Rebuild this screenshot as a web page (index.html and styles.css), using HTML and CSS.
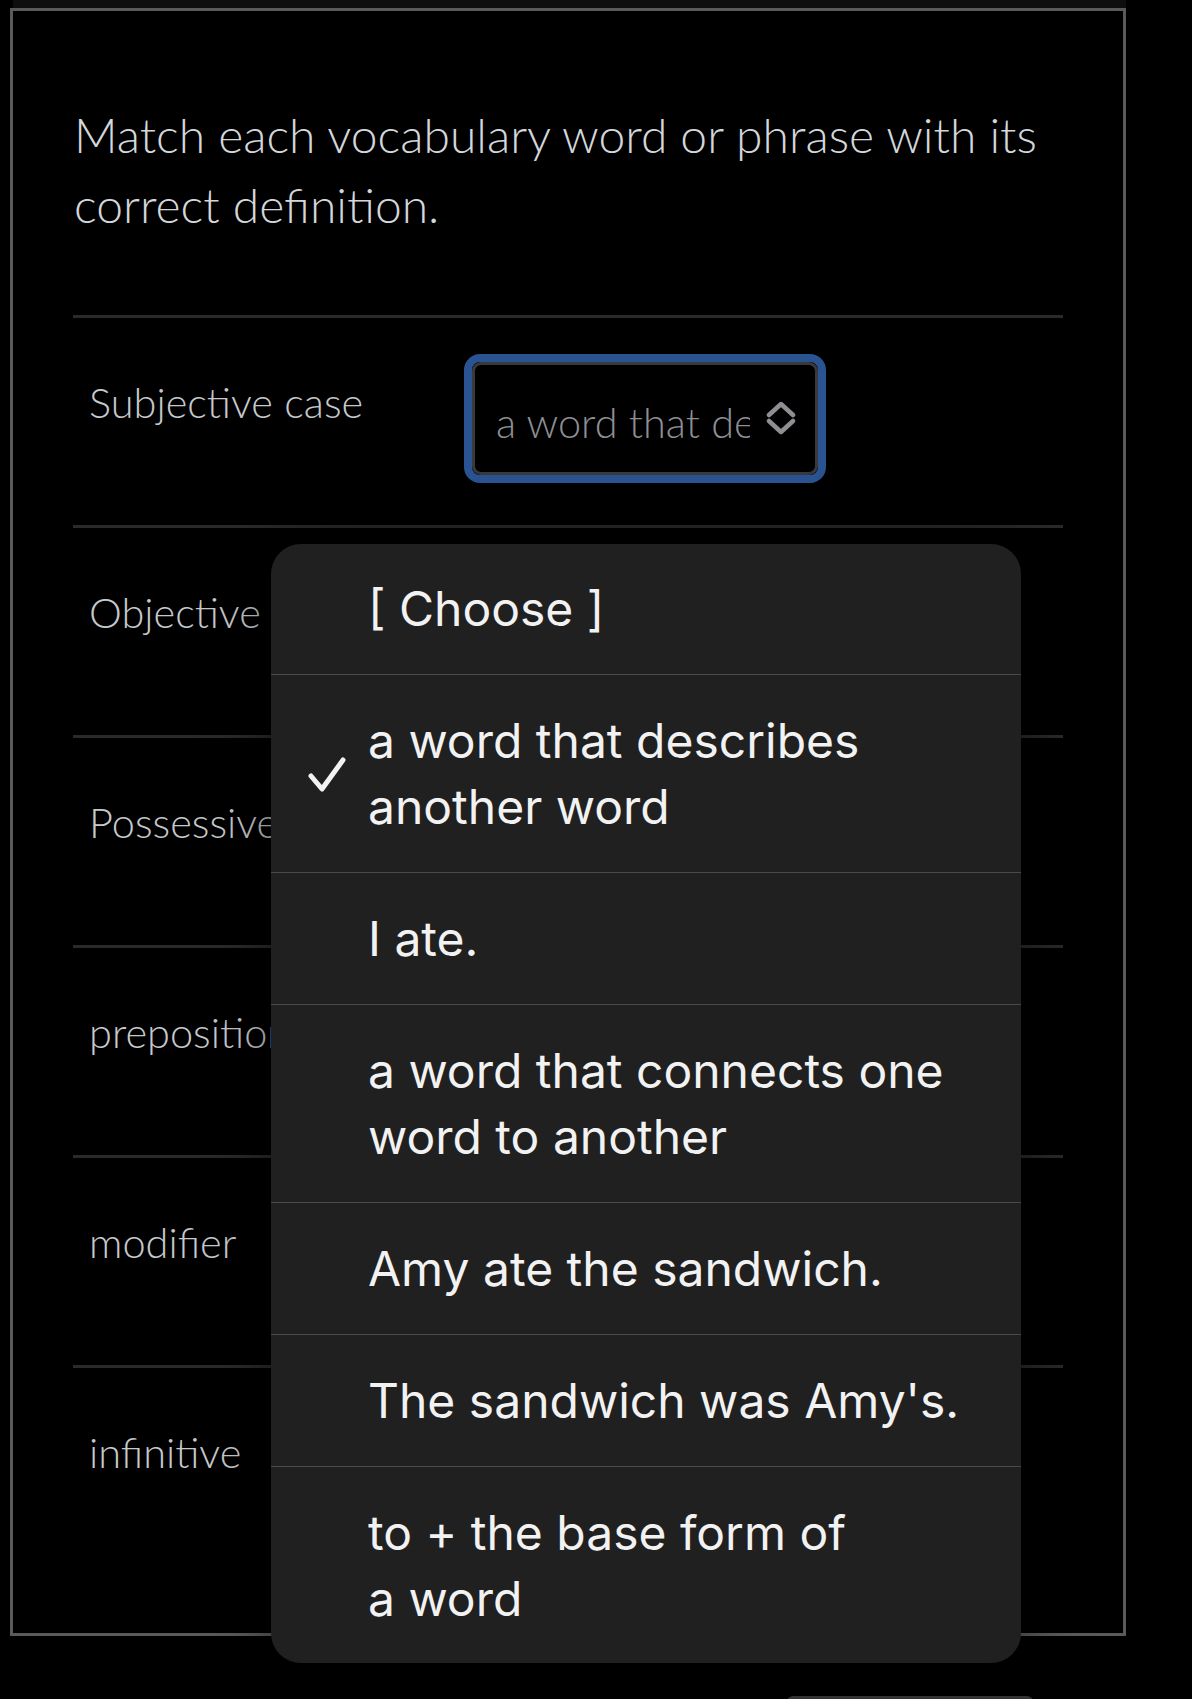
FILE: index.html
```html
<!DOCTYPE html>
<html lang="en">
<head>
<meta charset="utf-8">
<title>Matching question</title>
<link rel="stylesheet" href="styles.css">
</head>
<body>
<div class="screen">
  <div class="frame">
    <div class="prev-strip"></div>
    <div class="question">
      <p class="prompt">Match each vocabulary word or phrase with its correct definition.</p>
      <div class="match-list">
        <div class="match-row">
          <div class="term">Subjective case</div>
          <div class="select-focus">
            <div class="select">
              <span class="select-value">a word that describes another word</span>
              <svg class="select-chevron" viewBox="0 0 30 34" width="30" height="34"><path d="M3 14 L15 3 L27 14 M3 20 L15 31 L27 20" fill="none" stroke="#8e8e93" stroke-width="4.5" stroke-linecap="round" stroke-linejoin="round"/></svg>
            </div>
          </div>
        </div>
        <div class="match-row"><div class="term">Objective case</div></div>
        <div class="match-row"><div class="term">Possessive case</div></div>
        <div class="match-row"><div class="term">preposition</div></div>
        <div class="match-row"><div class="term">modifier</div></div>
        <div class="match-row"><div class="term">infinitive</div></div>
      </div>
    </div>
  </div>

  <div class="menu">
    <div class="menu-item first">[ Choose ]</div>
    <div class="menu-item selected">
      <svg class="check" viewBox="0 0 40 40" width="40" height="40"><path d="M4 20 L15 33 L36 4" fill="none" stroke="#f2f2f2" stroke-width="5" stroke-linecap="round" stroke-linejoin="round"/></svg>
      a word that describes<br>another word
    </div>
    <div class="menu-item">I ate.</div>
    <div class="menu-item">a word that connects one<br>word to another</div>
    <div class="menu-item">Amy ate the sandwich.</div>
    <div class="menu-item">The sandwich was Amy's.</div>
    <div class="menu-item">to + the base form of<br>a word</div>
  </div>

  <div class="home-indicator"></div>
</div>
</body>
</html>
```

FILE: styles.css
```css
html, body {
  margin: 0;
  padding: 0;
  background: #000;
}

.screen {
  position: relative;
  width: 1192px;
  height: 1699px;
  overflow: hidden;
  background: #000;
}

.frame {
  margin-left: 10px;
  width: 1116px;
}

.prev-strip {
  height: 8px;
  margin-left: 3px;
  background: #0e0e0e;
}

.question {
  border: 3px solid #5a5a5a;
  padding: 89px 60px 58px 60px;
  font-family: "Lato Light", "Lato", "Liberation Sans", sans-serif;
  font-weight: 300;
}

.prompt {
  margin: 0 0 75px 1px;
  font-size: 48px;
  line-height: 70px;
  color: #d3d7db;
}

.match-row {
  height: 210px;
  box-sizing: border-box;
  border-top: 3px solid #2a2a2a;
  padding: 36px 0 0 16px;
  display: flex;
  align-items: flex-start;
}

.term {
  width: 375px;
  padding-top: 24px;
  font-size: 41.5px;
  line-height: 48px;
  color: #c6c9cc;
  white-space: nowrap;
}

.select-focus {
  width: 362px;
  height: 129px;
  box-sizing: border-box;
  border: 8px solid #2a5391;
  border-radius: 16px;
}

.select {
  height: 100%;
  box-sizing: border-box;
  border: 3px solid #3a3a3c;
  border-radius: 9px;
  background: #000;
  display: flex;
  align-items: center;
  padding: 6px 19px 0 21px;
  gap: 16px;
}

.select-value {
  flex: 1;
  overflow: hidden;
  white-space: nowrap;
  font-size: 41.5px;
  line-height: 48px;
  color: #8e8e93;
}

.select-chevron {
  flex: none;
  margin-top: -8px;
}

.menu {
  position: absolute;
  left: 271px;
  top: 544px;
  width: 750px;
  height: 1119px;
  background: #202020;
  border-radius: 30px;
  overflow: hidden;
  box-shadow: 0 0 60px rgba(0, 0, 0, 0.6);
  font-family: "Inter", "Roboto", sans-serif;
  font-weight: 400;
  font-size: 48px;
  line-height: 66px;
  color: #f2f2f2;
}

.menu-item {
  position: relative;
  padding: 32.5px 20px 32.5px 97px;
  white-space: nowrap;
  border-bottom: 1px solid #4a4a4c;
}

.menu-item.first {
  padding-top: 31.5px;
}

.menu-item:last-child {
  border-bottom: none;
}

.check {
  position: absolute;
  left: 36px;
  top: 50%;
  margin-top: -18px;
}

.home-indicator {
  position: absolute;
  left: 787px;
  top: 1696px;
  width: 246px;
  height: 12px;
  border-radius: 6px;
  background: #333336;
}
```
